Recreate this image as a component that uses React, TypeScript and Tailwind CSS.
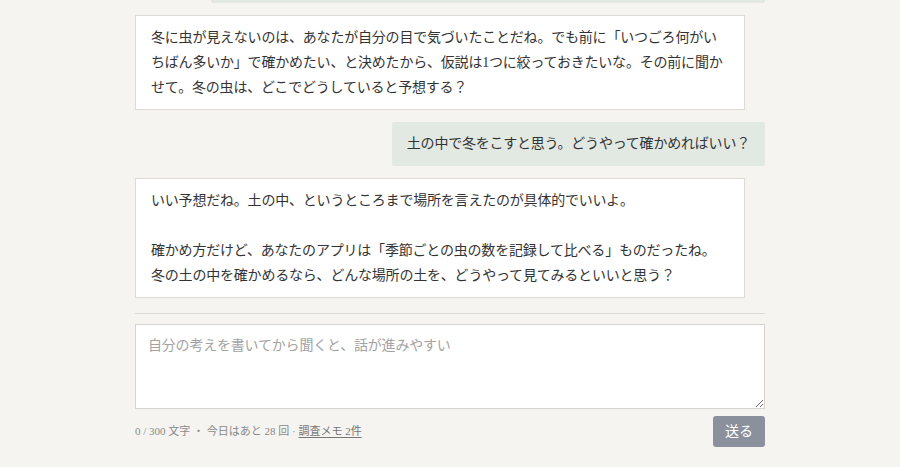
export default function App() {
  return (
    <div
      className="h-[467px] overflow-hidden bg-[#f5f4f0] text-[#333]"
      style={{ fontFamily: '"Liberation Serif", "Noto Sans CJK JP", serif' }}
    >
      <div className="mx-auto flex w-[630px] flex-col">
        {/* Messages */}
        <div className="flex flex-col gap-3">
          <div className="-mt-[42px] ml-auto h-[45px] w-[554px] rounded-[2px] bg-[#e2e9e3]" />

          <div className="w-[610px] border border-[#dddbd4] bg-white px-[15px] py-[9px] text-[14px] leading-[25px] tracking-[-0.2px]">
            冬に虫が見えないのは、あなたが自分の目で気づいたことだね。でも前に「いつごろ何がいちばん多いか」で確かめたい、と決めたから、仮説は1つに絞っておきたいな。その前に聞かせて。冬の虫は、どこでどうしていると予想する？
          </div>

          <div className="ml-auto rounded-[2px] bg-[#e2e9e3] px-[15px] py-[10px] text-[14px] leading-[24px] tracking-[-0.2px]">
            土の中で冬をこすと思う。どうやって確かめればいい？
          </div>

          <div className="w-[610px] whitespace-pre-wrap border border-[#dddbd4] bg-white px-[15px] py-[9px] text-[14px] leading-[25px] tracking-[-0.2px]">
            {"いい予想だね。土の中、というところまで場所を言えたのが具体的でいいよ。\n\n確かめ方だけど、あなたのアプリは「季節ごとの虫の数を記録して比べる」ものだったね。冬の土の中を確かめるなら、どんな場所の土を、どうやって見てみるといいと思う？"}
          </div>
        </div>

        <div className="mt-[15px] border-t border-[#dcdad3]" />

        {/* Input */}
        <textarea
          className="mt-[10px] h-[85px] w-full resize-y border border-[#d6d4cc] bg-white px-3 py-[9px] text-[14px] leading-[24px] tracking-[-0.2px] text-[#333] outline-none placeholder:text-[#a3a3a3]"
          style={{ fontFamily: '"Liberation Serif", "Noto Sans CJK JP", serif' }}
          placeholder="自分の考えを書いてから聞くと、話が進みやすい"
        />

        <div className="mt-[7px] flex items-center justify-between">
          <div className="text-[11px] text-[#8a8a8a]">
            0 / 300 文字 ・ 今日はあと 28 回 ·{" "}
            <span className="text-[#777] underline underline-offset-2">調査メモ 2件</span>
          </div>
          <button
            className="h-[31px] w-[52px] rounded-[3px] bg-[#8a919c] text-[14px] text-white"
            style={{ fontFamily: '"Liberation Serif", "Noto Sans CJK JP", serif' }}
          >
            送る
          </button>
        </div>
      </div>
    </div>
  );
}
